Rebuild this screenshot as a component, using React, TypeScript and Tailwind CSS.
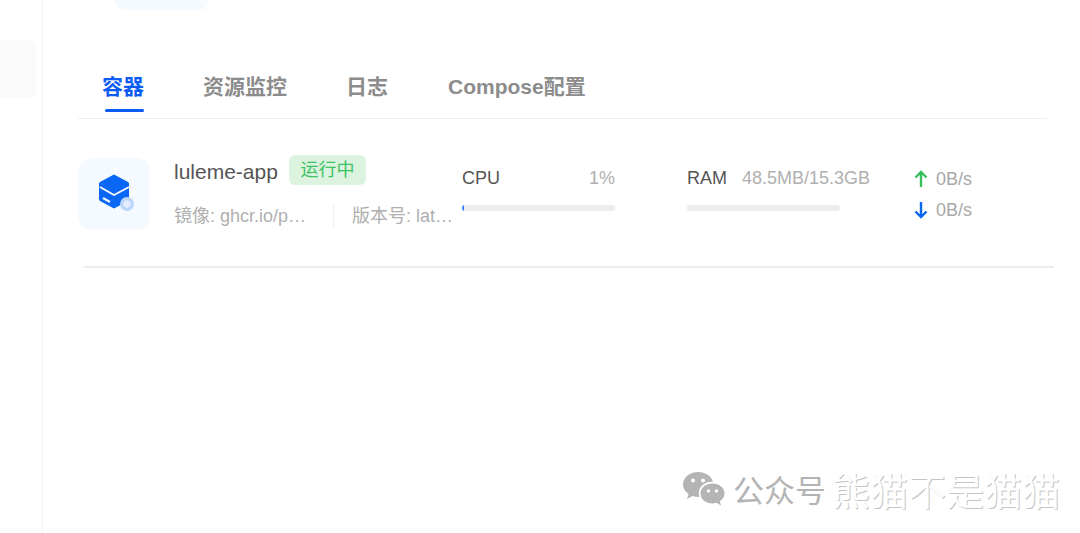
const cjk = 'font-["Liberation_Sans","Noto_Sans_CJK_SC",sans-serif]';

function BoxIcon() {
  return (
    <svg className="mb-[2px]" width="38" height="38" viewBox="0 0 38 38">
      <path d="M18 0.5 L32 8 Q33 8.5 33 10 L33 25 Q33 26.5 32 27 L18 34.5 L4 27 Q3 26.5 3 25 L3 10 Q3 8.5 4 8 Z" fill="#0a66f5" />
      <path d="M4 13 L18 21 L33 13" fill="none" stroke="#ffffff" strokeWidth="1.8" />
      <path d="M7 24 L14 28" fill="none" stroke="#e6f0ff" strokeWidth="2.4" />
      <circle cx="31" cy="30" r="7" fill="#bcd6fb" />
      <path d="M31 26 L34.5 28 L34.5 32 L31 34 L27.5 32 L27.5 28 Z" fill="#e3eefd" />
    </svg>
  );
}

function WeChat() {
  return (
    <svg width="43" height="36" viewBox="0 0 43 36">
      <path d="M16 1 C7.5 1 1 6.6 1 13.5 C1 17.5 3.2 20.8 6.6 23.2 L5 28 L10.6 25.1 C12.4 25.6 14.2 26 16 26 C16.5 26 17 26 17.4 25.9 C17 24.7 16.8 23.5 16.8 22.2 C16.8 15.6 22.8 10.8 30 10.8 C30.4 10.8 30.7 10.8 31 10.9 C29.6 5.2 23.4 1 16 1 Z" fill="#b4b4b4" />
      <circle cx="11" cy="9.5" r="2" fill="#fff" />
      <circle cx="21" cy="9.5" r="2" fill="#fff" />
      <path d="M42.5 22.5 C42.5 16.6 36.8 12.5 30.5 12.5 C23.8 12.5 18.5 16.8 18.5 22.5 C18.5 28.2 23.8 32.5 30.5 32.5 C31.9 32.5 33.3 32.2 34.6 31.8 L39 34.5 L37.8 30.2 C40.7 28.2 42.5 25.5 42.5 22.5 Z" fill="#b4b4b4" />
      <circle cx="26.5" cy="20" r="1.7" fill="#fff" />
      <circle cx="34.5" cy="20" r="1.7" fill="#fff" />
    </svg>
  );
}

function Tabs() {
  const tabClass = 'pt-[6px] text-[21px] leading-[32px] font-bold text-[#8c8c8c]';
  return (
    <div className={`flex h-[54px] w-[969px] border-b border-[#efefef] pl-[24px] ${cjk}`}>
      <div className="flex w-[43px] flex-col">
        <div className="pt-[6px] text-[21px] leading-[32px] font-bold text-[#0a5cf5]">容器</div>
        <div className="mr-[1px] mt-[6px] h-[3px] w-[39px] self-end rounded-full bg-[#0a5cf5]" />
      </div>
      <div className={`ml-[58px] ${tabClass}`}>资源监控</div>
      <div className={`ml-[59px] ${tabClass}`}>日志</div>
      <div className={`ml-[60px] ${tabClass}`}>Compose配置</div>
    </div>
  );
}

function Meter({ className, label, value, fill }: { className: string; label: string; value: string; fill?: boolean }) {
  return (
    <div className={className}>
      <div className="flex h-[24px] items-center justify-between text-[18px] leading-[24px]">
        <span className="text-[#555555]">{label}</span>
        <span className="text-[#b0b0b0]">{value}</span>
      </div>
      <div className="mt-[15px] h-[6px] w-[153px] overflow-hidden rounded-full bg-[#ececec]">
        {fill && <div className="h-full w-[2px] bg-[#3b82f6]" />}
      </div>
    </div>
  );
}

function Row() {
  return (
    <div className={`flex h-[149px] w-[970px] items-start border-b-[2px] border-[#ececec] ${cjk}`}>
      <div className="-ml-[6px] mt-[39px] flex h-[72px] w-[72px] items-center justify-center rounded-[14px] bg-[#f4faff] pl-[2px]">
        <BoxIcon />
      </div>
      <div className="ml-[24px] w-[288px] shrink-0">
        <div className="mt-[36px] flex h-[30px] items-start">
          <span className="mt-[2px] text-[21px] leading-[30px] text-[#555555]">luleme-app</span>
          <span className="ml-[11px] flex h-[30px] w-[77px] items-center justify-center rounded-[6px] bg-[#dcf3e0] text-[18px] text-[#3cc264]">运行中</span>
        </div>
        <div className="mt-[18px] flex h-[26px] items-center whitespace-nowrap text-[18px] text-[#b0b0b0]">
          <span className="w-[159px]">镜像: ghcr.io/p…</span>
          <span className="mr-[18px] h-[24px] w-px bg-[#efefef]" />
          <span>版本号: lat…</span>
        </div>
      </div>
      <Meter className="mt-[47px] w-[153px] shrink-0" label="CPU" value="1%" fill />
      <Meter className="mt-[47px] ml-[72px] w-[183px] shrink-0" label="RAM" value="48.5MB/15.3GB" />
      <div className="ml-[44px] mt-[48px] text-[18px] text-[#a8a8a8]">
        <div className="flex h-[24px] items-center">
          <svg width="14" height="18" viewBox="0 0 14 18" fill="none" stroke="#36c05c" strokeWidth="2.4"><path d="M7 17V2M1.5 7.5 7 2l5.5 5.5" /></svg>
          <span className="ml-[8px]">0B/s</span>
        </div>
        <div className="mt-[7px] flex h-[24px] items-center">
          <svg width="14" height="18" viewBox="0 0 14 18" fill="none" stroke="#0a66f5" strokeWidth="2.4"><path d="M7 1v15M1.5 10.5 7 16l5.5-5.5" /></svg>
          <span className="ml-[8px]">0B/s</span>
        </div>
      </div>
    </div>
  );
}

export default function App() {
  return (
    <div className="relative flex h-[533px] w-[1080px] overflow-hidden bg-white">
      <aside className="h-full w-[43px] shrink-0 border-r border-[#f3f3f3] pt-[40px]">
        <div className="h-[58px] w-[36px] rounded-r-[6px] bg-[#fafafa]" />
      </aside>
      <main className="flex-1 pl-[35px]">
        <div className="ml-[37px] h-[10px] w-[94px] rounded-b-[10px] bg-[#f5faff]" />
        <div className="pt-[55px]">
          <Tabs />
        </div>
        <div className="pl-[6px]">
          <Row />
        </div>
      </main>
      <div className="absolute left-[682px] top-[471px] flex items-center font-['Noto_Sans_CJK_SC',sans-serif]">
        <WeChat />
        <span className="ml-[8px] text-[31px] leading-[36px] text-[#b4b4b4]">公众号</span>
        <span className="ml-[6px] text-[38px] leading-[36px] text-white [text-shadow:1px_1px_0_#c4c4c4]">熊猫不是猫猫</span>
      </div>
    </div>
  );
}
